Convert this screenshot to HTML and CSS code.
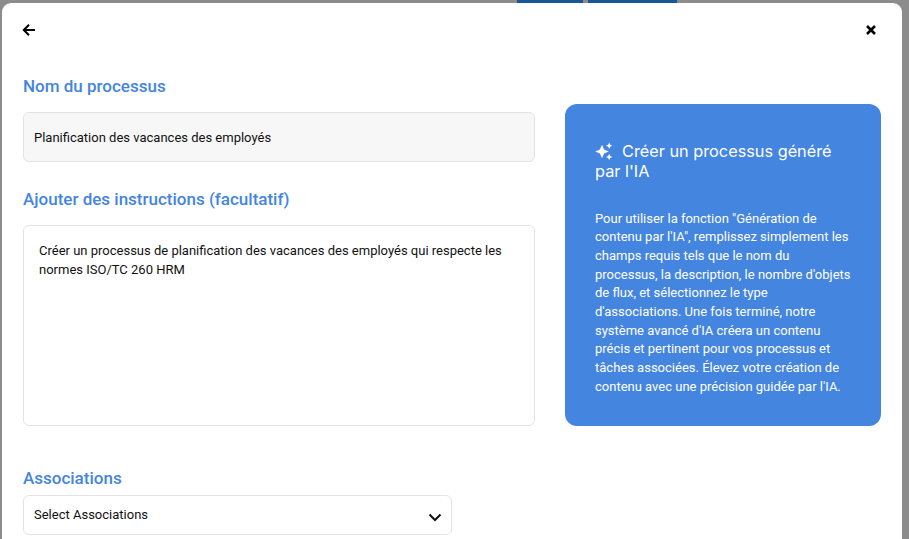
FILE: index.html
```html
<!DOCTYPE html>
<html lang="fr">
<head>
<meta charset="utf-8">
<title>Créer un processus</title>
<link rel="stylesheet" href="styles.css">
</head>
<body>
<div class="backdrop">
  <div class="backdrop-bar bar-a"></div>
  <div class="backdrop-bar bar-b"></div>
</div>
<main class="modal">
  <header class="modal-head">
    <svg class="icon" viewBox="0 0 14 14" width="14" height="14"><path d="M13 7H2M7 1.8 1.8 7 7 12.2" fill="none" stroke="#000" stroke-width="2"/></svg>
    <svg class="icon" viewBox="0 0 12 12" width="12" height="12"><path d="M2 2l8 8M10 2l-8 8" fill="none" stroke="#000" stroke-width="2.6"/></svg>
  </header>
  <div class="top-grid">
    <div class="fields">
      <h2 class="label label-first">Nom du processus</h2>
      <div class="input filled">Planification des vacances des employés</div>
      <h2 class="label label-second">Ajouter des instructions (facultatif)</h2>
      <div class="textarea">Créer un processus de planification des vacances des employés qui respecte les normes ISO/TC 260 HRM</div>
    </div>
    <aside class="ai-card">
      <h3 class="ai-title"><svg class="sparkle" viewBox="0 0 18 18" width="18" height="18"><path fill="#fff" d="M7 2.8 9.1 7.4 13.8 9.5 9.1 11.6 7 16.2 4.9 11.6.2 9.5 4.9 7.4ZM14.2.6 15.2 2.8 17.4 3.8 15.2 4.8 14.2 7 13.2 4.8 11 3.8 13.2 2.8ZM14.2 11.8 15.2 14 17.4 15 15.2 16 14.2 18.2 13.2 16 11 15 13.2 14Z"/></svg>Créer un processus généré par l'IA</h3>
      <p class="ai-text">Pour utiliser la fonction "Génération de contenu par l'IA", remplissez simplement les champs requis tels que le nom du processus, la description, le nombre d'objets de flux, et sélectionnez le type d'associations. Une fois terminé, notre système avancé d'IA créera un contenu précis et pertinent pour vos processus et tâches associées. Élevez votre création de contenu avec une précision guidée par l'IA.</p>
    </aside>
  </div>
  <h2 class="label label-third">Associations</h2>
  <div class="select"><span>Select Associations</span>
    <svg viewBox="0 0 14 9" width="14" height="9"><path d="M1.5 1.5 7 7l5.5-5.5" fill="none" stroke="#111" stroke-width="2"/></svg>
  </div>
</main>
</body>
</html>
```
FILE: styles.css
```css
* { box-sizing: border-box; }
html, body { margin: 0; height: 539px; overflow: hidden; }
body {
  background: #8c8c8c;
  font-family: Roboto, sans-serif;
  color: #111;
  padding: 3px 7px 0 2px;
}
.backdrop { position: absolute; inset: 0 0 auto 0; height: 3px; }
.backdrop-bar { position: absolute; top: 0; height: 3px; background: #18569c; }
.bar-a { left: 517px; width: 66px; }
.bar-b { left: 588px; width: 89px; }
.modal {
  position: relative;
  background: #fff;
  height: 536px;
  overflow: hidden;
  border-radius: 9px 9px 0 0;
  padding: 0 20px 0 21px;
}
.modal-head {
  display: flex;
  justify-content: space-between;
  align-items: center;
  height: 54px;
  padding: 0 5px 0 0;
  margin-left: -1px;
}
.top-grid { display: grid; grid-template-columns: 512px 316px; column-gap: 30px; align-items: stretch; }
.fields { display: flex; flex-direction: column; }
.label { margin: 0; color: #4485e0; font-size: 17px; line-height: 20px; font-weight: 500; }
.label-first { margin-top: 19px; margin-bottom: 16px; }
.label-second { margin-top: 27px; margin-bottom: 16px; }
.label-third { margin-top: 42px; margin-bottom: 7px; }
.input, .textarea, .select {
  border: 1px solid #e3e3e3;
  border-radius: 6px;
  font-size: 13px;
}
.input { height: 50px; padding: 0 10px; display: flex; align-items: center; }
.filled { background: #f7f7f7; }
.textarea { height: 201px; padding: 15px 15px 0; line-height: 19px; background: #fff; }
.ai-card {
  margin-top: 47px;
  background: #4485e0;
  color: #fff;
  border-radius: 12px;
  padding: 38px 30px 0;
}
.ai-title { margin: 0 0 28.5px; font-size: 16.3px; line-height: 19.5px; font-weight: 400; font-family: Inter, sans-serif; }
.sparkle { vertical-align: -3px; margin-right: 9px; }
.ai-text { margin: 0; font-size: 13px; line-height: 18.7px; }
.select {
  width: 429px;
  height: 40px;
  padding: 0 9px 2px 10px;
  display: flex;
  align-items: center;
  justify-content: space-between;
}
.select svg { margin-top: 6px; }
```
